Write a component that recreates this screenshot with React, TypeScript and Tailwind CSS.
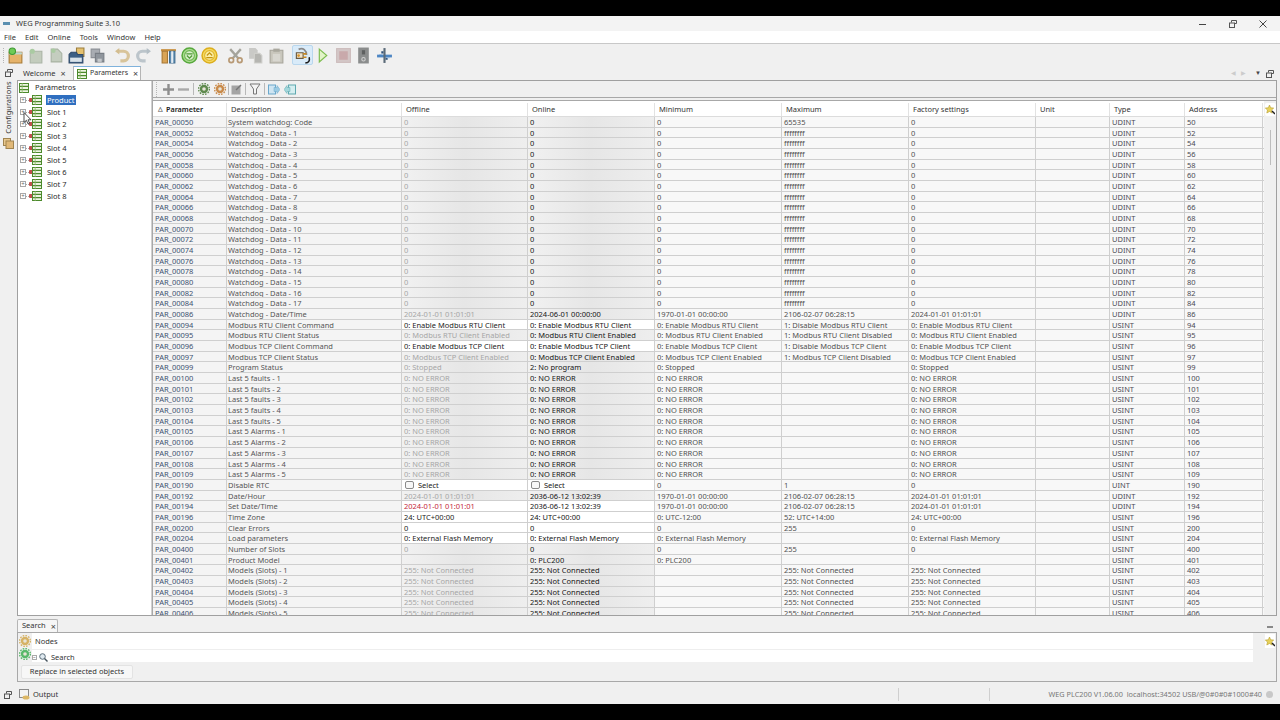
import { ReactNode } from 'react';

type Row = {
    id: string;
    desc: string;
    off: string;
    on: string;
    min: string;
    max: string;
    fac: string;
    type: string;
    addr: string;
    edit?: boolean;
    check?: boolean;
    red?: boolean;
};

const row = (n: number, desc: string, off: string, on: string, min: string, max: string, fac: string, type: string, extra: Partial<Row> = {}): Row => ({
    id: `PAR_${String(n).padStart(5, '0')}`,
    desc,
    off,
    on,
    min,
    max,
    fac,
    type,
    addr: String(n),
    ...extra,
});

const rows: Row[] = [
    row(50, 'System watchdog: Code', '0', '0', '0', '65535', '0', 'UDINT'),
    ...Array.from({ length: 17 }, (_, i) => row(52 + i * 2, `Watchdog - Data - ${i + 1}`, '0', '0', '0', 'ffffffff', '0', 'UDINT')),
    row(86, 'Watchdog - Date/Time', '2024-01-01 01:01:01', '2024-06-01 00:00:00', '1970-01-01 00:00:00', '2106-02-07 06:28:15', '2024-01-01 01:01:01', 'UDINT'),
    row(94, 'Modbus RTU Client Command', '0: Enable Modbus RTU Client', '0: Enable Modbus RTU Client', '0: Enable Modbus RTU Client', '1: Disable Modbus RTU Client', '0: Enable Modbus RTU Client', 'USINT', { edit: true }),
    row(95, 'Modbus RTU Client Status', '0: Modbus RTU Client Enabled', '0: Modbus RTU Client Enabled', '0: Modbus RTU Client Enabled', '1: Modbus RTU Client Disabled', '0: Modbus RTU Client Enabled', 'USINT'),
    row(96, 'Modbus TCP Client Command', '0: Enable Modbus TCP Client', '0: Enable Modbus TCP Client', '0: Enable Modbus TCP Client', '1: Disable Modbus TCP Client', '0: Enable Modbus TCP Client', 'USINT', { edit: true }),
    row(97, 'Modbus TCP Client Status', '0: Modbus TCP Client Enabled', '0: Modbus TCP Client Enabled', '0: Modbus TCP Client Enabled', '1: Modbus TCP Client Disabled', '0: Modbus TCP Client Enabled', 'USINT'),
    row(99, 'Program Status', '0: Stopped', '2: No program', '0: Stopped', '', '0: Stopped', 'USINT'),
    ...[100, 101, 102, 103, 104].map((n, i) => row(n, `Last 5 faults - ${i + 1}`, '0: NO ERROR', '0: NO ERROR', '0: NO ERROR', '', '0: NO ERROR', 'USINT')),
    ...[105, 106, 107, 108, 109].map((n, i) => row(n, `Last 5 Alarms - ${i + 1}`, '0: NO ERROR', '0: NO ERROR', '0: NO ERROR', '', '0: NO ERROR', 'USINT')),
    row(190, 'Disable RTC', 'Select', 'Select', '0', '1', '0', 'UINT', { edit: true, check: true }),
    row(192, 'Date/Hour', '2024-01-01 01:01:01', '2036-06-12 13:02:39', '1970-01-01 00:00:00', '2106-02-07 06:28:15', '2024-01-01 01:01:01', 'UDINT'),
    row(194, 'Set Date/Time', '2024-01-01 01:01:01', '2036-06-12 13:02:39', '1970-01-01 00:00:00', '2106-02-07 06:28:15', '2024-01-01 01:01:01', 'UDINT', { edit: true, red: true }),
    row(196, 'Time Zone', '24: UTC+00:00', '24: UTC+00:00', '0: UTC-12:00', '52: UTC+14:00', '24: UTC+00:00', 'USINT', { edit: true }),
    row(200, 'Clear Errors', '0', '0', '0', '255', '0', 'USINT', { edit: true }),
    row(204, 'Load parameters', '0: External Flash Memory', '0: External Flash Memory', '0: External Flash Memory', '', '0: External Flash Memory', 'USINT', { edit: true }),
    row(400, 'Number of Slots', '0', '0', '0', '255', '0', 'USINT'),
    row(401, 'Product Model', '', '0: PLC200', '0: PLC200', '', '', 'USINT'),
    ...[402, 403, 404, 405, 406].map((n, i) => row(n, `Models (Slots) - ${i + 1}`, '255: Not Connected', '255: Not Connected', '', '255: Not Connected', '255: Not Connected', 'USINT')),
];

const gridCols = 'grid grid-cols-[74px_175px_126px_127px_127px_127px_127px_74px_75px_78px]';

function Ico({ children, size = 16 }: { children: ReactNode; size?: number }) {
    return (
        <svg width={size} height={size} viewBox="0 0 16 16" fill="none">
            {children}
        </svg>
    );
}

function GridIcon({ pin = false }: { pin?: boolean }) {
    return (
        <span className="flex items-center">
            {pin && <span className="mr-[-1px] h-[4px] w-[4px] rounded-[1px] bg-[#c0504d]" />}
            <svg width="10" height="10" viewBox="0 0 10 10">
                <rect x="0.5" y="0.5" width="9" height="9" fill="#eef5e2" stroke="#4c8a2c" />
                <path d="M0 3.4h10M0 6.6h10" stroke="#4c8a2c" strokeWidth="1.2" />
                <path d="M3.2 0v10" stroke="#8db86a" strokeWidth="0.8" />
            </svg>
        </span>
    );
}

function Sheet({ fill = '#c4cdbf', stroke = '#a8b2a2' }: { fill?: string; stroke?: string }) {
    return <path d="M3 2h6l4 4v8H3z" fill={fill} stroke={stroke} />;
}

function MainTool({ name }: { name: string }) {
    switch (name) {
        case 'new':
            return (
                <Ico size={17}>
                    <path d="M2 5h12v10H2z" fill="#e6b36a" stroke="#a87a35" />
                    <path d="M2 5h12v2H2z" fill="#bcd9d2" />
                    <circle cx="5" cy="4" r="3" fill="#6fcb57" stroke="#3f9a33" />
                </Ico>
            );
        case 'sheet1':
            return (
                <Ico size={17}>
                    <path d="M3 4h11v11H3z" fill="#c3ccbd" stroke="#aab4a5" />
                    <circle cx="5" cy="4" r="2.4" fill="#aacba2" />
                </Ico>
            );
        case 'sheet2':
            return (
                <Ico size={17}>
                    <Sheet />
                    <circle cx="5" cy="3.5" r="2.2" fill="#aacba2" />
                </Ico>
            );
        case 'folder':
            return (
                <Ico size={17}>
                    <path d="M8 1h7v8H8z" fill="#e5c16e" stroke="#9c7d3a" />
                    <path d="M1 7l2-2h5l1 2h5v8H1z" fill="#3c5f85" stroke="#2f4a69" />
                    <path d="M2 10h11v4H2z" fill="#d9e3ea" />
                </Ico>
            );
        case 'save':
            return (
                <Ico size={17}>
                    <path d="M2 2h8v8H2z" fill="#a8acb2" stroke="#8c9096" />
                    <path d="M6 6h8v8H6z" fill="#8f959c" stroke="#777d84" />
                    <path d="M8 11h4v3H8z" fill="#c6c9cc" />
                </Ico>
            );
        case 'undo':
            return (
                <Ico size={17}>
                    <path d="M3 4h6a4 4 0 0 1 0 9H6" stroke="#d8c49a" strokeWidth="3" />
                    <path d="M1 4l4-3v6z" fill="#d3bd90" />
                </Ico>
            );
        case 'redo':
            return (
                <Ico size={17}>
                    <path d="M13 4H7a4 4 0 0 0 0 9h3" stroke="#bcc5cb" strokeWidth="3" />
                    <path d="M15 4l-4-3v6z" fill="#b4bec5" />
                </Ico>
            );
        case 'build':
            return (
                <Ico size={17}>
                    <path d="M1 2h14v2H1z" fill="#c98f3e" />
                    <path d="M2 4h5v11H2z" fill="#d9a456" stroke="#a67530" />
                    <path d="M9 4h5v11H9z" fill="#5f8fb5" stroke="#3f6b8e" />
                    <path d="M10.5 4h2v11h-2z" fill="#e6edf2" />
                </Ico>
            );
        case 'down':
            return (
                <Ico size={17}>
                    <circle cx="8" cy="8" r="7" fill="#a9dc8e" stroke="#57a83c" strokeWidth="1.4" />
                    <circle cx="8" cy="8" r="4.6" fill="#d8f0ca" stroke="#6bb24f" />
                    <path d="M5 6.5h6M5.5 8l2.5 2.5L10.5 8" stroke="#4f9a36" strokeWidth="1.2" />
                </Ico>
            );
        case 'up':
            return (
                <Ico size={17}>
                    <circle cx="8" cy="8" r="7" fill="#f6d95f" stroke="#dcae1d" strokeWidth="1.4" />
                    <circle cx="8" cy="8" r="4.6" fill="#fbeea6" stroke="#dfb52a" />
                    <path d="M5 10h6M5.5 8L8 5.5 10.5 8" stroke="#c4940f" strokeWidth="1.2" />
                </Ico>
            );
        case 'cut':
            return (
                <Ico size={17}>
                    <path d="M3 2l8 9M13 2l-8 9" stroke="#a5a49c" strokeWidth="2.2" />
                    <circle cx="4" cy="12.5" r="2.2" stroke="#b89a76" strokeWidth="1.6" />
                    <circle cx="12" cy="12.5" r="2.2" stroke="#b89a76" strokeWidth="1.6" />
                </Ico>
            );
        case 'copy':
            return (
                <Ico size={17}>
                    <path d="M2 1h6l2 2v8H2z" fill="#c9c9c6" />
                    <path d="M7 6h5l2 2v7H7z" fill="#b5b5b1" stroke="#cfcfcb" />
                </Ico>
            );
        case 'paste':
            return (
                <Ico size={17}>
                    <path d="M2 3h12v12H2z" fill="#c8c6bc" stroke="#a6a49a" />
                    <path d="M5 1.5h6v3H5z" fill="#aaa89e" />
                    <path d="M4.5 6.5h7v7h-7z" fill="#d8d7d0" />
                </Ico>
            );
        case 'plug':
            return (
                <Ico size={18}>
                    <path d="M3 6h6v5H3z" fill="#efe2c8" stroke="#6a5a40" />
                    <path d="M5 3c4-2 7 1 7 5" stroke="#8a8a8a" strokeWidth="1.6" />
                    <path d="M9 7h3M9 10h3" stroke="#c9891f" strokeWidth="1.4" />
                    <path d="M11 15c3 0 4-2 3.4-5" stroke="#1c1c1c" strokeWidth="1.4" />
                    <circle cx="5" cy="8.5" r="1.2" fill="#d9942a" />
                </Ico>
            );
        case 'play':
            return (
                <Ico size={17}>
                    <path d="M5 2l7 6-7 6z" fill="#e2f3c8" stroke="#7cbc4e" strokeWidth="1.1" />
                </Ico>
            );
        case 'stop':
            return (
                <Ico size={17}>
                    <rect x="1.5" y="1.5" width="13" height="13" fill="#d3c6c6" stroke="#cdbdbd" />
                    <rect x="4" y="4" width="8" height="8" fill="#c9a9ab" />
                </Ico>
            );
        case 'switch':
            return (
                <Ico size={17}>
                    <rect x="3" y="0.5" width="10" height="15" fill="#8a8c8c" />
                    <rect x="6.5" y="3" width="3" height="4" fill="#5e6060" />
                    <circle cx="8" cy="11.5" r="1.6" stroke="#d0d0d0" />
                </Ico>
            );
        default:
            return (
                <Ico size={17}>
                    <path d="M1 8.5h14" stroke="#4d86c4" strokeWidth="2.6" />
                    <path d="M8 1v14" stroke="#5a6a78" strokeWidth="2" />
                    <path d="M5 5h2M9 11h2" stroke="#2d4f78" strokeWidth="2" />
                    <path d="M3 6.5h3v1H3zM10 9.5h3v1h-3z" fill="#93b7dc" />
                </Ico>
            );
    }
}

function ToolDots({ className = '' }: { className?: string }) {
    return <span className={`h-[15px] w-0 border-l border-dotted border-[#b5b5b5] ${className}`} />;
}

function MainToolbar() {
    const cell = 'flex h-[20px] w-[20.5px] items-center justify-center';
    const groups = [
        ['new', 'sheet1', 'sheet2', 'folder', 'save'],
        ['undo', 'redo'],
        ['build', 'down', 'up'],
        ['cut', 'copy', 'paste'],
    ];
    return (
        <div className="flex h-[22px] shrink-0 items-center bg-[#f0f0f0] pl-[3px]">
            <ToolDots className="mr-[1px]" />
            {groups.map((g, i) => (
                <div key={i} className="mr-[5px] flex items-center">
                    {g.map((n) => (
                        <span key={n} className={cell}>
                            <MainTool name={n} />
                        </span>
                    ))}
                </div>
            ))}
            <span className="flex h-[20px] w-[21px] items-center justify-center rounded-[2px] border border-[#b9d7ee] bg-[#d9ebf9]">
                <MainTool name="plug" />
            </span>
            {['play', 'stop', 'switch', 'plane'].map((n) => (
                <span key={n} className={cell}>
                    <MainTool name={n} />
                </span>
            ))}
        </div>
    );
}

function Gear({ color }: { color: string }) {
    return (
        <svg width="12" height="12" viewBox="0 0 12 12">
            <circle cx="6" cy="6" r="4.2" fill={color} />
            <circle cx="6" cy="6" r="5.4" fill="none" stroke={color} strokeWidth="1.4" strokeDasharray="1.6 1.2" />
            <circle cx="6" cy="6" r="1.8" fill="#e8e4d8" />
        </svg>
    );
}

function TableToolbar() {
    return (
        <div className="flex h-[17px] shrink-0 items-center gap-[4px] border-b border-[#a8a8a8] bg-[#f0f0f0] pl-[3px]">
            <ToolDots className="mr-[2px]" />
            <svg width="11" height="11" viewBox="0 0 11 11">
                <path d="M0 5.5h11M5.5 0v11" stroke="#8e8e8e" strokeWidth="2.4" />
            </svg>
            <svg width="11" height="11" viewBox="0 0 11 11">
                <path d="M0 5.5h11" stroke="#a9a9a9" strokeWidth="2.4" />
            </svg>
            <span className="h-[12px] border-l border-[#b8b8b8]" />
            <Gear color="#5f8a4e" />
            <Gear color="#c98a4a" />
            <span className="-mx-[2px] h-[12px] border-l border-[#b8b8b8]" />
            <svg width="11" height="11" viewBox="0 0 11 11">
                <rect x="0.5" y="1.5" width="9" height="9" fill="#a4a4a4" />
                <path d="M5 6l5-5" stroke="#777" strokeWidth="1.5" />
            </svg>
            <span className="-mx-[1px] h-[12px] border-l border-[#b8b8b8]" />
            <svg width="12" height="12" viewBox="0 0 12 12">
                <path d="M1 1h10L7.5 6v5h-3V6z" fill="#f4f4f4" stroke="#777" />
            </svg>
            <span className="-mx-[1px] h-[12px] border-l border-[#b8b8b8]" />
            <svg width="12" height="11" viewBox="0 0 12 11">
                <rect x="0.5" y="1" width="7" height="9" fill="#cfe5f2" stroke="#6ba8cc" />
                <path d="M6 3.5h3V1.5l3 4-3 4v-2H6z" fill="#9ccbe3" stroke="#6ba8cc" strokeWidth="0.5" />
            </svg>
            <svg width="12" height="11" viewBox="0 0 12 11">
                <rect x="4.5" y="1" width="7" height="9" fill="#d5eef0" stroke="#5ea9b0" />
                <path d="M6 3.5H3V1.5l-3 4 3 4v-2h3z" fill="#a4d8dc" stroke="#5ea9b0" strokeWidth="0.5" />
            </svg>
        </div>
    );
}

function StarTool() {
    return (
        <svg width="10" height="11" viewBox="0 0 10 11">
            <path d="M4.5 1l1.2 2.8 3 .3-2.2 2 .7 3-2.7-1.6L1.8 9l.7-3L.3 4.1l3-.3z" fill="#e8d25a" stroke="#b59c2e" strokeWidth="0.6" />
            <path d="M7 7l3 3" stroke="#222" strokeWidth="1.4" />
        </svg>
    );
}

function Cell({ children, className = '' }: { children?: ReactNode; className?: string }) {
    return <div className={`overflow-hidden whitespace-nowrap border-r border-[#cfcfcf] leading-[10px] ${className}`}>{children}</div>;
}

function ValueCell({ r, value, online }: { r: Row; value: string; online: boolean }) {
    const bg = r.edit ? 'bg-white' : 'bg-gradient-to-r from-[#f1f1f1] via-[#e6e6e6] to-[#eeeeee]';
    let color = online ? 'text-[#151515]' : 'text-[#a6a6a6]';
    if (!online && r.edit) color = 'text-[#1c1c1c]';
    if (!online && r.red) color = 'text-[#c4283c]';
    return (
        <Cell className={`pl-[2px] ${bg} ${color}`}>
            {r.check ? (
                <span className="ml-[1px] flex items-center gap-[4px]">
                    <span className="h-[8px] w-[9px] rounded-[2px] border border-[#8a8a8a] bg-[#f7f7f7]" />
                    <span>{value}</span>
                </span>
            ) : (
                value
            )}
        </Cell>
    );
}

function ParamTable() {
    const heads = ['Parameter', 'Description', 'Offline', 'Online', 'Minimum', 'Maximum', 'Factory settings', 'Unit', 'Type', 'Address'];
    return (
        <div className="flex min-h-0 flex-1 flex-col">
            <div className={`${gridCols} h-[16px] shrink-0 border-b border-[#dcdcdc] bg-white pt-[2px] text-[#333]`}>
                {heads.map((h, i) => (
                    <div key={h} className={`flex items-center border-r border-[#e2e2e2] pl-[4px] ${i === 0 ? 'pl-[5px] text-[7.2px] font-semibold text-[#222]' : ''}`}>
                        {i === 0 && <span className="mr-[3px] text-[6px] text-[#555]">△</span>}
                        {h}
                    </div>
                ))}
            </div>
            <div className="min-h-0 flex-1 overflow-hidden bg-white">
                {rows.map((r) => (
                    <div key={r.id} className={`${gridCols} h-[10.68px] border-b border-[#cfcfcf] bg-[#f8f8f8] text-[#505050]`}>
                        <Cell className="bg-[#f4f4f4] pl-[2px] text-[#3d5270]">{r.id}</Cell>
                        <Cell className="bg-[#f4f4f4] pl-[1px] text-[#555]">{r.desc}</Cell>
                        <ValueCell r={r} value={r.off} online={false} />
                        <ValueCell r={r} value={r.on} online />
                        <Cell className="pl-[2px]">{r.min}</Cell>
                        <Cell className="pl-[2px]">{r.max}</Cell>
                        <Cell className="pl-[2px]">{r.fac}</Cell>
                        <Cell />
                        <Cell className="pl-[2px] text-[#4a4a55]">{r.type}</Cell>
                        <Cell className="pl-[2px] text-[#4a4a55]">{r.addr}</Cell>
                    </div>
                ))}
            </div>
        </div>
    );
}

function Tree() {
    const items = ['Product', 'Slot 1', 'Slot 2', 'Slot 3', 'Slot 4', 'Slot 5', 'Slot 6', 'Slot 7', 'Slot 8'];
    return (
        <div className="relative w-[133px] shrink-0 bg-white pl-[2px] pt-[1px] text-[#2a2a2a]">
            <div className="-ml-[1px] flex h-[12px] items-center gap-[6px]">
                <GridIcon />
                <span>Parâmetros</span>
            </div>
            {items.map((t, i) => (
                <div key={t} className="flex h-[12px] items-center">
                    <span className="flex h-[6px] w-[6px] items-center justify-center border border-[#a8a8a8] text-[6px] leading-none text-[#666]">
                        +
                    </span>
                    <span className="w-[3px] border-t border-dotted border-[#aaa]" />
                    <GridIcon pin />
                    <span className={`ml-[4px] px-[1px] leading-[10px] ${i === 0 ? 'bg-[#2f6fc0] text-white' : ''}`}>{t}</span>
                </div>
            ))}
            <svg className="absolute left-[5px] top-[31px]" width="9" height="13" viewBox="0 0 9 13">
                <path d="M1 0.5v10l2.4-2.2 1.6 3.6 1.6-.7L5 7.8h3z" fill="#fff" stroke="#222" strokeWidth="0.8" />
            </svg>
        </div>
    );
}

function RestoreIcon() {
    return (
        <svg width="8" height="8" viewBox="0 0 8 8" fill="none" stroke="#555">
            <path d="M2.5 2.5V.5h5v3h-2" />
            <rect x="0.5" y="3" width="5" height="4.5" />
        </svg>
    );
}

function Close({ className = 'ml-[5px]' }: { className?: string }) {
    return <span className={`text-[9px] leading-none text-[#444] ${className}`}>×</span>;
}

export default function App() {
    return (
        <div className="flex h-[720px] w-[1280px] flex-col overflow-hidden bg-black text-[7.5px] font-['Noto_Sans','Liberation_Sans',sans-serif]">
            <div className="h-[16px] shrink-0" />
            <div className="flex h-[15px] shrink-0 items-center bg-[#f3f3f3] pl-[3px] text-[#333]">
                <span className="mr-[6px] h-[3px] w-[7px] bg-[#5a8fb0]" />
                WEG Programming Suite 3.10
                <div className="ml-auto flex items-center gap-[22px] pr-[13px] text-[#333]">
                    <svg width="8" height="8" viewBox="0 0 8 8"><path d="M0 4.5h7" stroke="#444" /></svg>
                    <RestoreIcon />
                    <svg width="8" height="8" viewBox="0 0 8 8"><path d="M.5.5l7 7M7.5.5l-7 7" stroke="#444" /></svg>
                </div>
            </div>
            <div className="flex h-[13px] shrink-0 items-center gap-[9px] border-b border-[#c8c8c8] bg-white pl-[4px] pt-[1px] text-[#333]">
                {['File', 'Edit', 'Online', 'Tools', 'Window', 'Help'].map((m) => (
                    <span key={m}>{m}</span>
                ))}
            </div>
            <MainToolbar />

            <div className="flex h-[619px] shrink-0 flex-col bg-[#f0f0f0]">
                <div className="flex min-h-0 flex-1">
                    <div className="flex w-[17px] shrink-0 flex-col items-center pt-[3px]">
                        <RestoreIcon />
                        <div className="mt-[4px] flex h-[54px] w-[12px] items-center justify-center">
                            <span className="-rotate-90 whitespace-nowrap text-[#333]">Configurations</span>
                        </div>
                        <svg className="mt-[3px]" width="11" height="11" viewBox="0 0 11 11">
                            <rect x="0.5" y="0.5" width="7" height="7" fill="#e8c88e" stroke="#a08450" />
                            <rect x="3" y="3" width="7.5" height="7.5" fill="#e0b878" stroke="#a08450" />
                        </svg>
                    </div>
                    <div className="flex min-w-0 flex-1 flex-col pr-[3px]">
                        <div className="flex h-[14px] shrink-0 items-end text-[#333]">
                            <div className="flex h-[13px] w-[56px] items-center pl-[6px]">
                                Welcome
                                <Close />
                            </div>
                            <div className="flex h-[14px] w-[68px] items-center gap-[3px] border-x border-t border-x-[#b5b5b5] border-t-[#7fb2dc] bg-white pl-[3px] text-[7px]">
                                <GridIcon />
                                Parameters
                                <Close className="ml-[2px]" />
                            </div>
                            <div className="ml-auto mr-[3px] flex items-center gap-[5px] self-center pt-[1px]">
                                <span className="text-[6px] text-[#ccc]">◀</span>
                                <span className="text-[6px] text-[#ccc]">▶</span>
                                <span className="ml-[4px] text-[6px] text-[#444]">▼</span>
                                <RestoreIcon />
                            </div>
                        </div>
                        <div className="flex min-h-0 flex-1 border border-[#a0a0a0]">
                            <Tree />
                            <div className="w-[1px] bg-[#d0d0d0]" />
                            <div className="flex min-w-0 flex-1 flex-col border-l border-[#a8a8a8]">
                                <TableToolbar />
                                <div className="h-[2px] shrink-0 bg-[#f0f0f0]" />
                                <div className="flex min-h-0 flex-1 border-t border-[#a8a8a8]">
                                    <div className="flex w-[1111px] shrink-0 flex-col">
                                        <ParamTable />
                                    </div>
                                    <div className="flex flex-1 flex-col items-center bg-[#f0f0f0] pt-[2px]">
                                        <div className="flex h-[13px] w-[11px] items-center justify-center rounded-[2px] bg-white">
                                            <StarTool />
                                        </div>
                                        <div className="mt-[14px] h-[35px] border-l border-[#bdbdbd]" />
                                    </div>
                                </div>
                            </div>
                        </div>
                    </div>
                </div>

                <div className="ml-[17px] mr-[3px] flex h-[69px] shrink-0 flex-col py-[3px] text-[#333]">
                    <div className="flex h-[13px] shrink-0 items-end justify-between">
                        <div className="flex h-[13px] w-[41px] items-center rounded-t-[2px] border-x border-t border-[#b5b5b5] bg-[#f6f6f6] pl-[4px]">
                            Search
                            <Close />
                        </div>
                        <svg className="mb-[3px] mr-[3px]" width="8" height="4" viewBox="0 0 8 4"><path d="M1 2h6" stroke="#444" strokeWidth="1.2" /></svg>
                    </div>
                    <div className="flex min-h-0 flex-1 border border-[#a8a8a8] bg-[#f0f0f0]">
                        <div className="flex w-[14px] shrink-0 flex-col items-center gap-[1px] pt-[2px]">
                            <Gear color="#d6b264" />
                            <Gear color="#58b96a" />
                        </div>
                        <div className="flex min-w-0 flex-1 flex-col pr-[12px]">
                            <div className="flex h-[17px] shrink-0 items-center border-b border-[#eeeeee] bg-white pl-[3px] pt-[2px]">Nodes</div>
                            <div className="flex h-[12px] shrink-0 items-center gap-[2px] bg-white pt-[3px]">
                                <span className="flex h-[5px] w-[5px] items-center justify-center border border-[#aaa] text-[5px] leading-none">−</span>
                                <svg width="9" height="9" viewBox="0 0 9 9" fill="none">
                                    <circle cx="3.5" cy="3.5" r="2.8" fill="#dfe9f0" stroke="#5b6d7a" />
                                    <path d="M5.5 5.5L8.5 8.5" stroke="#44525c" strokeWidth="1.4" />
                                </svg>
                                <span className="ml-[1px]">Search</span>
                            </div>
                            <div className="-ml-[11px] mt-[3px] flex h-[14px] w-[112px] shrink-0 items-center justify-center rounded-[2px] border border-[#e3e3e3] bg-[#f7f7f7]">
                                Replace in selected objects
                            </div>
                        </div>
                        <div className="mr-[1px] mt-[1px] flex h-[14px] w-[10px] items-center justify-center bg-white">
                            <StarTool />
                        </div>
                    </div>
                </div>
            </div>

            <div className="flex h-[19px] shrink-0 items-center bg-[#f0f0f0] pl-[4px] text-[#444]">
                <div className="flex w-[894px] shrink-0 items-center">
                    <RestoreIcon />
                    <svg className="ml-[7px]" width="11" height="11" viewBox="0 0 11 11">
                        <rect x="0.5" y="0.5" width="9" height="8" fill="#f3f3f3" stroke="#8a8a8a" />
                        <ellipse cx="7" cy="8.5" rx="3.5" ry="2" fill="#dcb765" />
                    </svg>
                    <span className="ml-[3px] text-[#333]">Output</span>
                </div>
                <span className="h-[13px] border-l border-[#cfcfcf]" />
                <span className="ml-[90px] h-[13px] border-l border-[#cfcfcf]" />
                <span className="ml-auto whitespace-nowrap text-[7.3px] text-[#777]">WEG PLC200 V1.06.00&nbsp;&nbsp;localhost:34502 USB/@0#0#0#1000#40</span>
                <span className="ml-[4px] mr-[7px] h-[7px] w-[7px] rounded-full bg-[#c8c8c8]" />
            </div>
            <div className="flex-1" />
        </div>
    );
}
